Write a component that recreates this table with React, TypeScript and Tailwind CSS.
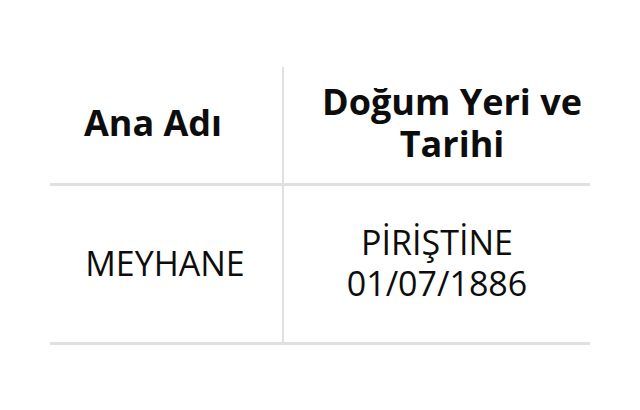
const rows = [{ mother: 'MEYHANE', place: 'PİRİŞTİNE', date: '01/07/1886' }]

export default function App() {
  return (
    <div className="h-[410px] w-[640px] bg-white pl-[50px] pt-[67px] text-[#0d0d0d] [font-family:'Open_Sans',sans-serif]">
      <div className="grid w-[540px] grid-cols-[234px_306px]">
        <div className="flex h-[119px] items-center justify-center border-b-[3px] border-r-2 border-[#e0e0e0] pb-[5px] pr-[26px] text-[36px] font-bold leading-[42px]">
          Ana Adı
        </div>
        <div className="flex h-[119px] items-center justify-center border-b-[3px] border-[#e0e0e0] pb-[4px] pl-[30px] text-center text-[36px] font-bold leading-[42px]">
          Doğum Yeri ve<br />Tarihi
        </div>
        {rows.map((r) => (
          <>
            <div key={r.mother} className="flex h-[159px] items-center justify-center border-b-[3px] border-r-2 border-[#e0e0e0] pb-[2px] pr-[2px] text-[34px] leading-[41px]">
              {r.mother}
            </div>
            <div className="flex h-[159px] items-center justify-center border-b-[3px] border-[#e0e0e0] pb-[2px] text-center text-[34px] leading-[41px]">
              {r.place}<br />{r.date}
            </div>
          </>
        ))}
      </div>
    </div>
  )
}
